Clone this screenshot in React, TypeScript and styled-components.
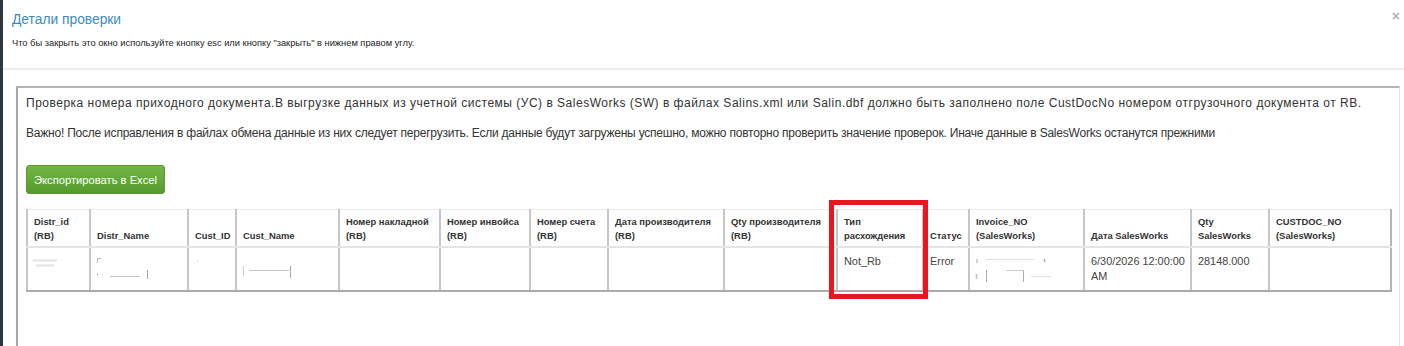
import React from "react";
import styled, { createGlobalStyle } from "styled-components";

const GlobalStyle = createGlobalStyle`
  html, body { margin: 0; padding: 0; background: #ffffff; }
  body { font-family: "Liberation Sans", Arial, sans-serif; color: #333; }
`;

const Page = styled.div`
  display: flex;
  width: 1404px;
  height: 346px;
  overflow: hidden;
  background: #fff;
`;

const Strip = styled.div`
  width: 3px;
  flex: none;
  background: #2f3540;
`;

const Modal = styled.div`
  flex: 1;
  display: flex;
  flex-direction: column;
  min-width: 0;
`;

const Header = styled.header`
  position: relative;
  padding: 11px 12px 0 9px;
  height: 57px;
  border-bottom: 2px solid #ececec;
`;

const Title = styled.h4`
  margin: 0;
  font-size: 13.8px;
  font-weight: normal;
  line-height: 18px;
  color: #3a8bc4;
`;

const Subtitle = styled.div`
  margin-top: 8px;
  font-size: 9.3px;
  line-height: 12px;
  color: #222;
`;

const Close = styled.span`
  position: absolute;
  right: 4px;
  top: 9px;
  font-size: 14px;
  font-weight: bold;
  color: #b5b5b5;
  line-height: 14px;
`;

const Body = styled.div`
  padding: 16px 4px 0 13px;
  flex: 1;
  display: flex;
`;

const Box = styled.div`
  flex: 1;
  border-top: 2px solid #b4b4b4;
  border-left: 2px solid #a8a8a8;
  border-right: 1px solid #e6e6e6;
  padding: 5px 8px 0 8px;
`;

const Para = styled.p<{ $tracking: number }>`
  margin: 0 0 10px;
  font-size: 12px;
  letter-spacing: ${(p) => p.$tracking}px;
  line-height: 20px;
  color: #333;
  white-space: nowrap;
`;

const ExportButton = styled.button`
  margin-top: 22px;
  display: block;
  width: 139px;
  height: 29px;
  padding: 0;
  border: 1px solid #5a9a33;
  border-radius: 3px;
  background: linear-gradient(#72b744, #549b2d);
  color: #fff;
  font-family: "Liberation Sans", Arial, sans-serif;
  font-size: 11.2px;
  cursor: pointer;
`;

const TableWrap = styled.div`
  position: relative;
  margin-top: 15px;
  width: 1364px;
`;

const Table = styled.table`
  border-collapse: collapse;
  table-layout: fixed;
  width: 1364px;
`;

const Th = styled.th`
  text-align: left;
  vertical-align: bottom;
  font-weight: bold;
  font-size: 9.4px;
  line-height: 14px;
  color: #333;
  padding: 5px 4px 3px 6px;
  border-top: 1px solid #ededed;
  border-left: 2px solid #c6c6c6;
  border-bottom: 2px solid #e4e4e4;
  white-space: nowrap;
  &:last-child { border-right: 2px solid #b5b5b5; }
`;

const Td = styled.td`
  vertical-align: top;
  font-size: 10.9px;
  line-height: 14.6px;
  color: #444;
  padding: 6px 4px 6px 6px;
  height: 44px;
  box-sizing: border-box;
  border-left: 2px solid #c6c6c6;
  border-bottom: 2px solid #ababab;
  white-space: nowrap;
  &:last-child { border-right: 2px solid #b5b5b5; }
`;

const Redacted = styled.svg`
  display: block;
  overflow: visible;
`;

const Highlight = styled.div`
  position: absolute;
  left: 803px;
  top: -9px;
  width: 99px;
  height: 99px;
  box-sizing: border-box;
  border: 5px solid #e8161f;
  pointer-events: none;
`;

const columns: { w: number; label: React.ReactNode }[] = [
  { w: 63, label: <>Distr_id<br />(RB)</> },
  { w: 98, label: "Distr_Name" },
  { w: 48, label: "Cust_ID" },
  { w: 103, label: "Cust_Name" },
  { w: 101, label: <>Номер накладной<br />(RB)</> },
  { w: 90, label: <>Номер инвойса<br />(RB)</> },
  { w: 78, label: <>Номер счета<br />(RB)</> },
  { w: 116, label: <>Дата производителя<br />(RB)</> },
  { w: 113, label: <>Qty производителя<br />(RB)</> },
  { w: 86, label: <>Тип<br />расхождения</> },
  { w: 46, label: "Статус" },
  { w: 115, label: <>Invoice_NO<br />(SalesWorks)</> },
  { w: 107, label: "Дата SalesWorks" },
  { w: 78, label: <>Qty<br />SalesWorks</> },
  { w: 122, label: <>CUSTDOC_NO<br />(SalesWorks)</> },
];

const cells: React.ReactNode[] = [
  <Redacted width="40" height="30" viewBox="0 0 40 30">
    <path d="M-1 6.5h24M2 11.5h18" stroke="#e2e2e2" strokeWidth="2" />
  </Redacted>,
  <Redacted width="80" height="30" viewBox="0 0 80 30">
    <path d="M0.5 9V4.5H4M0.5 19v3" stroke="#bbb" strokeWidth="1" fill="none" />
    <path d="M13 22.5h30" stroke="#c8c8c8" strokeWidth="1" />
    <path d="M50.5 16v9" stroke="#aaa" strokeWidth="1" />
  </Redacted>,
  <Redacted width="20" height="30" viewBox="0 0 20 30">
    <path d="M2.5 6v2" stroke="#ddd" strokeWidth="1" />
  </Redacted>,
  <Redacted width="80" height="30" viewBox="0 0 80 30">
    <path d="M0.5 12v10" stroke="#ccc" strokeWidth="1" />
    <path d="M6 16.5h40" stroke="#c8c8c8" strokeWidth="1" />
    <path d="M47.5 12v12" stroke="#aaa" strokeWidth="1" />
  </Redacted>,
  "",
  "",
  "",
  "",
  "",
  "Not_Rb",
  "Error",
  <Redacted width="90" height="30" viewBox="0 0 90 30">
    <path d="M1 5v4M0.5 20v5" stroke="#c4c4c4" strokeWidth="1.5" />
    <path d="M10 5.5h48M55 22.5h20" stroke="#e2e2e2" strokeWidth="1" />
    <path d="M68.5 5v3" stroke="#aaa" strokeWidth="1.5" />
    <path d="M10.5 16v12M47.5 16v12" stroke="#aaa" strokeWidth="1" />
    <path d="M30 16.5h18" stroke="#ccc" strokeWidth="1" />
  </Redacted>,
  <>6/30/2026 12:00:00<br />AM</>,
  "28148.000",
  "",
];

export default function App() {
  return (
    <>
      <GlobalStyle />
      <Page>
        <Strip />
        <Modal>
          <Header>
            <Title>Детали проверки</Title>
            <Subtitle>
              Что бы закрыть это окно используйте кнопку esc или кнопку "закрыть" в нижнем правом углу.
            </Subtitle>
            <Close>×</Close>
          </Header>
          <Body>
            <Box>
              <Para $tracking={0.5}>
                Проверка номера приходного документа.В выгрузке данных из учетной системы (УС) в SalesWorks (SW) в файлах Salins.xml или Salin.dbf должно быть заполнено поле CustDocNo номером отгрузочного документа от RB.
              </Para>
              <Para $tracking={-0.22}>
                Важно! После исправления в файлах обмена данные из них следует перегрузить. Если данные будут загружены успешно, можно повторно проверить значение проверок. Иначе данные в SalesWorks останутся прежними
              </Para>
              <ExportButton>Экспортировать в Excel</ExportButton>
              <TableWrap>
                <Table>
                  <colgroup>
                    {columns.map((c, i) => (
                      <col key={i} style={{ width: c.w }} />
                    ))}
                  </colgroup>
                  <thead>
                    <tr>
                      {columns.map((c, i) => (
                        <Th key={i}>{c.label}</Th>
                      ))}
                    </tr>
                  </thead>
                  <tbody>
                    <tr>
                      {cells.map((c, i) => (
                        <Td key={i}>{c}</Td>
                      ))}
                    </tr>
                  </tbody>
                </Table>
                <Highlight />
              </TableWrap>
            </Box>
          </Body>
        </Modal>
      </Page>
    </>
  );
}
